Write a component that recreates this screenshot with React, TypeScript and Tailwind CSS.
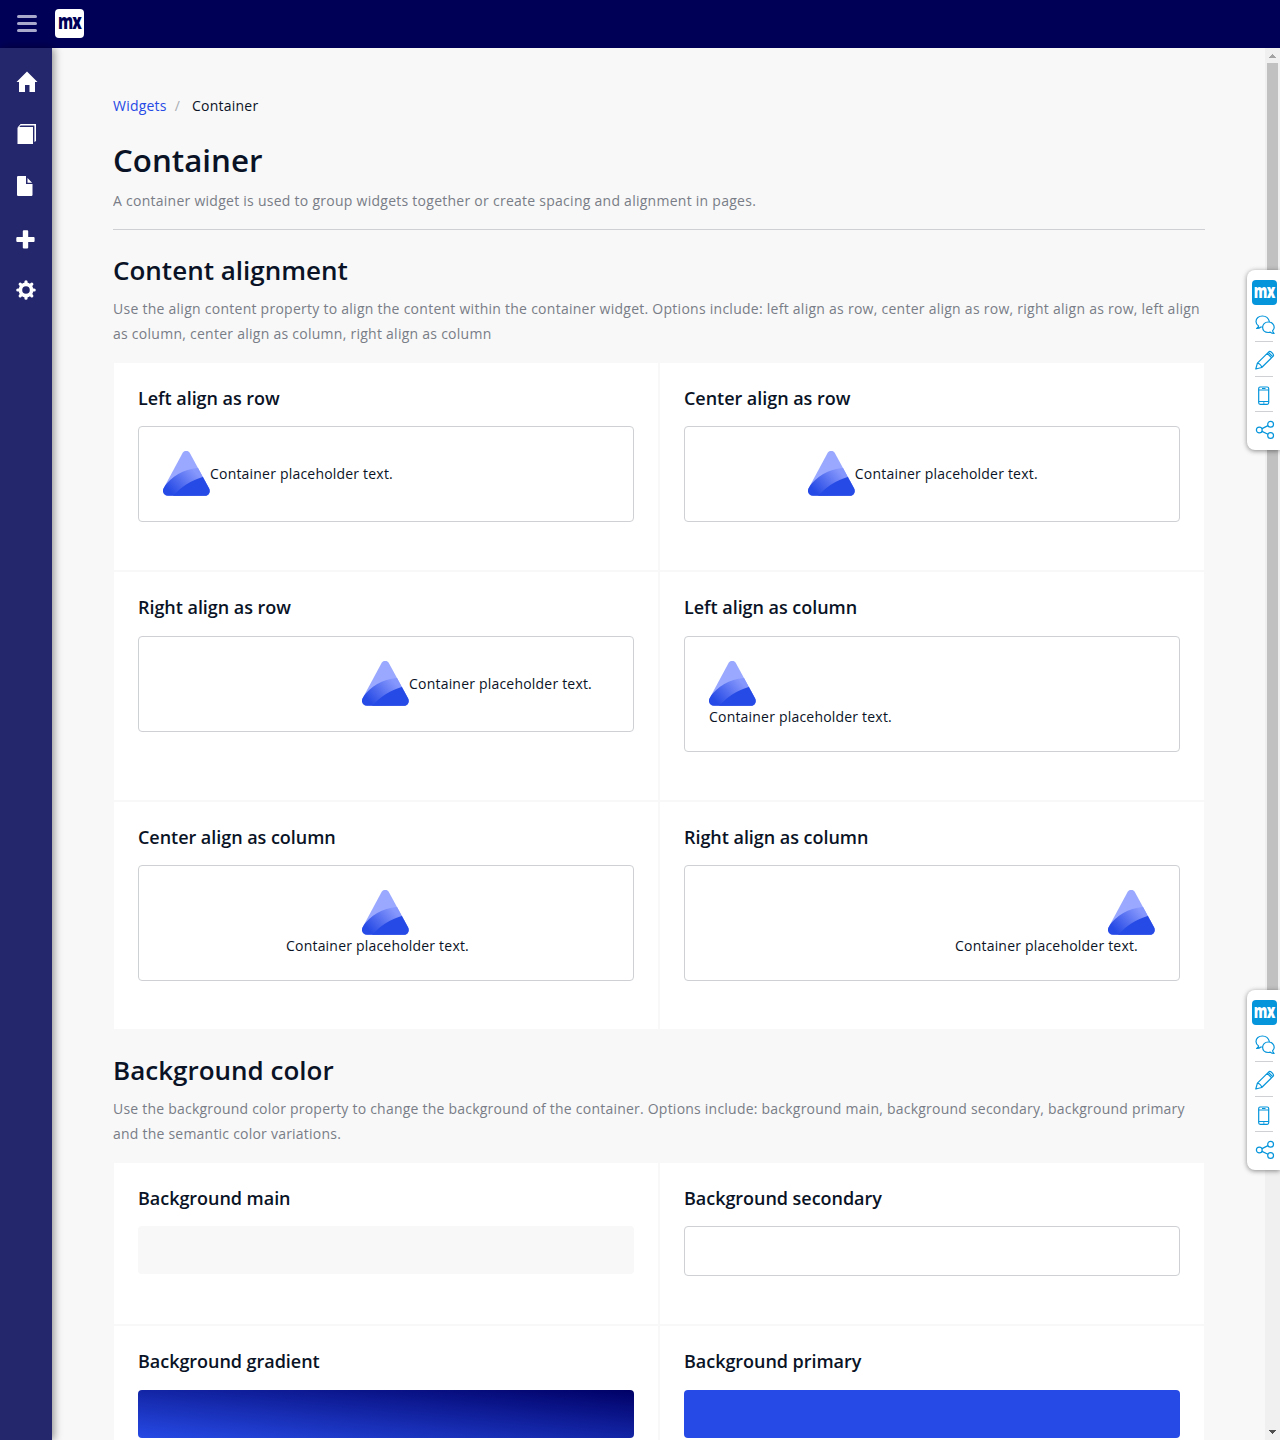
import React from "react";

function Triangle({ id }: { id: string }) {
  return (
    <svg width="47" height="46" viewBox="0 0 47 46" className="-mr-px block shrink-0">
      <defs>
        <clipPath id={`${id}-c`}>
          <path d="M19.700 1.800C21.200-.9 25.200-.9 26.700 1.800L46 37.300C47.900 40.900 45.700 44.800 41.700 44.800H5C1 44.800-1.300 40.900.600 37.300Z" />
        </clipPath>
        <linearGradient id={`${id}-g`} x1="0.05" y1="0.75" x2="0.9" y2="0.25">
          <stop offset="0.05" stopColor="#264ae5" />
          <stop offset="0.85" stopColor="#8596fc" />
        </linearGradient>
      </defs>
      <g clipPath={`url(#${id}-c)`}>
        <rect width="47" height="46" fill="#9aa9ff" />
        <path d="M0 37C9 25 20 18.500 35 17L47 16V46H0Z" fill={`url(#${id}-g)`} />
        <path d="M9 46C18 36 27 30 41 25.500L47 30V46Z" fill="#264ae5" />
      </g>
    </svg>
  );
}

function Cell({ title, children }: { title: string; children: React.ReactNode }) {
  return (
    <div className="border border-[#f8f8f8] bg-white px-6 pt-6 pb-12">
      <h3 className="mb-4 text-[18px] leading-[23.4px] font-semibold tracking-[-0.04px]">{title}</h3>
      {children}
    </div>
  );
}

function Demo({ title, id, align }: { title: string; id: string; align: string }) {
  return (
    <Cell title={title}>
      <div className={`flex rounded border border-[#ced0d3] p-6 ${align}`}>
        <Triangle id={id} />
        <p className="mr-[17px] ml-px leading-5 tracking-[0.2px]">Container placeholder text.</p>
      </div>
    </Cell>
  );
}

function ColumnDemo({ title, id, align, shift }: { title: string; id: string; align: string; shift: string }) {
  return (
    <Cell title={title}>
      <div className={`flex flex-col rounded border border-[#ced0d3] p-6 ${align}`}>
        <div className={shift}>
          <Triangle id={id} />
        </div>
        <p className="mr-[17px] leading-5 tracking-[0.2px]">Container placeholder text.</p>
      </div>
    </Cell>
  );
}

function Section({ title, text, spacing, children }: { title: string; text: string; spacing: string; children: React.ReactNode }) {
  return (
    <section className="h-[800px]">
      <h2 className="mb-[9px] pt-1 text-[26px] leading-[33px] font-semibold">{title}</h2>
      <p className={`mb-4 leading-[25px] text-[#787d87] ${spacing}`}>{text}</p>
      <div className="grid grid-cols-2">{children}</div>
    </section>
  );
}

function Toolbar({ top }: { top: string }) {
  const line = { fill: "none", stroke: "#0595db", strokeWidth: 1.2, strokeLinejoin: "round" as const };
  return (
    <div className={`absolute right-0 flex h-[180px] w-[33px] flex-col items-start rounded-l-lg bg-white pt-2.5 pl-[5px] shadow-[0_1px_5px_rgba(0,0,0,0.45)] ${top}`}>
      <div className="flex h-[25px] w-[25px] items-center justify-center rounded-[4px] bg-[#0595db]">
        <span className="-translate-y-[1.500px] scale-x-[0.8] scale-y-[1.12] text-[17px] leading-none font-extrabold tracking-[-0.5px] text-white">mx</span>
      </div>
      <div className="ml-[3px] flex h-[37px] w-[18px] items-center border-b border-[#ced0d3]">
        <svg width="20" height="20" viewBox="0 0 20 20" className="mt-1 shrink-0" {...line}>
          <path d="M14.500 6.800C13.500 3.200 10.800 1 7.400 1 3.800 1 1 3.300 1 6.500c0 1.900 1 3.500 2.600 4.500-.3 1.300-1.100 2-2 2.500 1.700.1 3.100-.4 4.300-1.500h1.400" />
          <path d="M13.200 7C9.800 7 7.600 9.400 7.600 12.300s2.300 5.200 5.600 5.200c.8 0 1.500-.1 2.100-.4 1 .9 2.200 1.400 3.800 1.400-.9-.7-1.400-1.600-1.500-2.700 1-.9 1.600-2.100 1.600-3.500C19.200 9.300 16.600 7 13.200 7Z" />
        </svg>
      </div>
      <div className="ml-[3px] flex h-[35px] w-[18px] items-center border-b border-[#ced0d3]">
        <svg width="20" height="20" viewBox="0 0 20 20" className="mt-0.5 shrink-0" {...line}>
          <path d="M.8 19 2.400 13.200 13.800 1.800C15.300.3 19.700 4.700 18.200 6.200L6.700 17.500ZM2.400 13.200c1.900.3 4 2.400 4.300 4.300M12.200 3.400l4.400 4.400M13.400 2.300l4.300 4.300" />
        </svg>
      </div>
      <div className="ml-[3px] flex h-[35px] w-[18px] items-center justify-center border-b border-[#ced0d3]">
        <svg width="12" height="20" viewBox="0 0 12 20" className="mt-[3px] mr-px shrink-0" {...line}>
          <rect x=".7" y="1" width="10" height="17.300" rx="1.500" />
          <path d="M.7 4h10M.7 15.500h10M4 2.500h3.500M5 17h1.500" />
        </svg>
      </div>
      <div className="ml-[3px] flex h-[35px] w-[18px] items-center">
        <svg width="20" height="20" viewBox="0 0 20 20" className="mt-px shrink-0" {...line}>
          <circle cx="4.300" cy="10" r="2.900" />
          <circle cx="15.600" cy="4.300" r="2.900" />
          <circle cx="15.600" cy="15.500" r="2.900" />
          <path d="m7 8.600 6-3M7 11.400l6 2.800" />
        </svg>
      </div>
    </div>
  );
}

function Sidebar() {
  return (
    <nav className="z-10 flex w-[52px] shrink-0 flex-col items-center bg-[#24276c] pt-2 shadow-[2px_0_8px_rgba(0,0,0,0.42)]">
      <div className="flex h-[52px] items-center justify-center">
        <svg width="22" height="22" viewBox="0 0 22 22" fill="#fff" className="ml-0.5"><path d="M11 .5 21.500 11H19v10h-5.500v-7H9v7H3V11H.5Z" /></svg>
      </div>
      <div className="flex h-[52px] items-center justify-center">
        <svg width="20" height="22" viewBox="0 0 20 22" fill="#fff" className="ml-0.5"><path d="M1.300 4H16v17H.5V4.800ZM1 4 3.600 1H19v17l-1.600 1V2.400H3.600L2.200 4Z" /></svg>
      </div>
      <div className="flex h-[52px] items-center justify-center">
        <svg width="16" height="20" viewBox="0 0 16 20" fill="#fff" className="mr-0.5"><path d="M.8 0H9v8h6.500v11.200l-.8.800H.8L0 19.200V.8ZM10.500 2l4.600 4.800h-4.600Z" /></svg>
      </div>
      <div className="flex h-[52px] items-center justify-center">
        <svg width="19" height="19" viewBox="0 0 19 19" fill="#fff" className="mt-0.5 mr-0.5"><path d="M7.500.2h4l.7.7V7H18l.6.7v3.600l-.6.700h-5.800v5.800l-.7.700h-4l-.7-.7V12H1l-.7-.7V7.700L1 7h5.800V.900Z" /></svg>
      </div>
      <div className="flex h-[52px] items-center justify-center">
        <svg width="20" height="20" viewBox="0 0 20 20" className="block">
          <circle cx="10" cy="10" r="5.600" fill="none" stroke="#fff" strokeWidth="3.600" />
          <path stroke="#fff" strokeWidth="3.200" strokeLinecap="round" d="M10 1.800v1.500M10 16.700v1.500M1.800 10h1.500M16.700 10h1.500M4.200 4.200l1.100 1.100M14.700 14.700l1.100 1.100M15.800 4.200l-1.100 1.100M5.300 14.700l-1.100 1.100" />
        </svg>
      </div>
    </nav>
  );
}

export default function App() {
  return (
    <div className="relative flex h-[1440px] w-[1280px] flex-col overflow-hidden bg-[#f8f8f8] font-['Open_Sans',sans-serif] text-[14px] text-[#0a1326]">
      <header className="flex h-12 shrink-0 items-center bg-[#000057]">
        <div className="mb-0.5 ml-[17px] flex w-5 flex-col gap-1">
          <i className="h-[3px] rounded-full bg-[#a9a9cc]" />
          <i className="h-[3px] rounded-full bg-[#a9a9cc]" />
          <i className="h-[3px] rounded-full bg-[#a9a9cc]" />
        </div>
        <div className="mb-px ml-[18px] flex h-[29px] w-[29px] items-center justify-center rounded-[4px] bg-white">
          <span className="-translate-y-[1.500px] scale-x-[0.8] scale-y-[1.14] text-[19px] leading-none font-extrabold tracking-[-1px] text-[#000057]">mx</span>
        </div>
      </header>
      <div className="flex min-h-0 flex-1">
        <Sidebar />
        <main className="ml-[61px] w-[1092px] shrink-0 overflow-hidden">
          <nav className="mt-12 flex h-5 items-center leading-5 tracking-[0.22px]">
            <a className="text-[#264ae5]">Widgets</a>
            <span className="ml-2 text-[#a9acb3]">/</span>
            <span className="ml-3">Container</span>
          </nav>
          <h1 className="mt-[23px] text-[31.300px] leading-[42px] font-semibold">Container</h1>
          <p className="mt-[7px] h-[42px] border-b border-[#ced0d3] leading-[25px] tracking-[0.262px] text-[#787d87]">
            A container widget is used to group widgets together or create spacing and alignment in pages.
          </p>
          <div className="pt-5">
            <Section spacing="tracking-[0.26px]" title="Content alignment" text="Use the align content property to align the content within the container widget. Options include: left align as row, center align as row, right align as row, left align as column, center align as column, right align as column">
              <Demo id="t1" title="Left align as row" align="items-center" />
              <Demo id="t2" title="Center align as row" align="items-center justify-center pr-[25.400px]" />
              <Demo id="t3" title="Right align as row" align="items-center justify-end" />
              <ColumnDemo id="t4" title="Left align as column" align="items-start" shift="" />
              <ColumnDemo id="t5" title="Center align as column" align="items-center" shift="mr-[3px]" />
              <ColumnDemo id="t6" title="Right align as column" align="items-end" shift="mr-px" />
            </Section>
            <Section spacing="tracking-[0.222px]" title="Background color" text="Use the background color property to change the background of the container. Options include: background main, background secondary, background primary and the semantic color variations.">
              <Cell title="Background main"><div className="h-12 rounded bg-[#f8f8f8]" /></Cell>
              <Cell title="Background secondary"><div className="h-[50px] rounded border border-[#ced0d3]" /></Cell>
              <Cell title="Background gradient"><div className="h-12 rounded bg-[linear-gradient(to_top_right,#264ae5,#000066)]" /></Cell>
              <Cell title="Background primary"><div className="h-12 rounded bg-[#264ae5]" /></Cell>
            </Section>
          </div>
        </main>
        <div className="ml-auto flex w-[15px] flex-col items-center bg-[#f0f0f0]">
          <svg width="15" height="15" viewBox="0 0 15 15" fill="#a3a3a3" shapeRendering="crispEdges"><path d="M4 10h7L7.500 6Z" /></svg>
          <div className="h-[1000px] w-[11px] bg-[#c1c1c1]" />
          <svg width="15" height="15" viewBox="0 0 15 15" fill="#505050" shapeRendering="crispEdges" className="mt-auto"><path d="M4 5h7L7.500 9Z" /></svg>
        </div>
      </div>
      <Toolbar top="top-[270px]" />
      <Toolbar top="top-[990px]" />
    </div>
  );
}
